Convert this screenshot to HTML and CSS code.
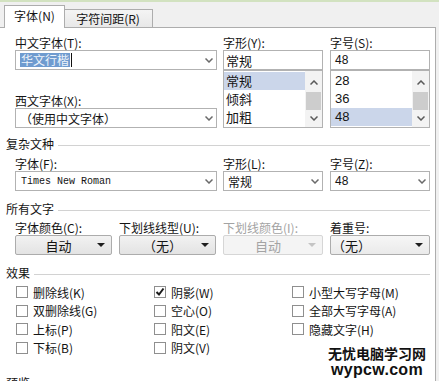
FILE: index.html
```html
<!DOCTYPE html>
<html lang="zh-CN">
<head>
  <meta charset="UTF-8">
  <title>字体</title>
  <link rel="stylesheet" href="styles.css">
</head>
<body>
  <div class="window">
    <div class="tabs">
      <div class="tab active">字体(N)</div>
      <div class="tab">字符间距(R)</div>
    </div>

    <div class="panel">
      <div class="row">
        <div class="col">
          <label>中文字体(T):</label>
          <div class="combo"><span class="pick">华文行楷</span><span class="caret"></span><svg class="chev" width="8" height="5" viewBox="0 0 8 5"><polyline points="0.5,0.5 4,4 7.5,0.5" /></svg></div>
          <label class="gap">西文字体(X):</label>
          <div class="combo"><span class="grow">（使用中文字体）</span><svg class="chev" width="8" height="5" viewBox="0 0 8 5"><polyline points="0.5,0.5 4,4 7.5,0.5" /></svg></div>
        </div>
        <div class="col">
          <label>字形(Y):</label>
          <div class="field">常规</div>
          <div class="list">
            <div class="items">
              <div class="item on">常规</div>
              <div class="item">倾斜</div>
              <div class="item">加粗</div>
            </div>
            <div class="scroll">
              <svg width="8" height="5" viewBox="0 0 8 5"><polyline points="0.5,4.5 4,1 7.5,4.5" /></svg>
              <div class="thumb"></div>
              <svg width="8" height="5" viewBox="0 0 8 5"><polyline points="0.5,0.5 4,4 7.5,0.5" /></svg>
            </div>
          </div>
        </div>
        <div class="col">
          <label>字号(S):</label>
          <div class="field num">48</div>
          <div class="list">
            <div class="items num">
              <div class="item">28</div>
              <div class="item">36</div>
              <div class="item on">48</div>
            </div>
            <div class="scroll">
              <svg width="8" height="5" viewBox="0 0 8 5"><polyline points="0.5,4.5 4,1 7.5,4.5" /></svg>
              <div class="thumb"></div>
              <svg width="8" height="5" viewBox="0 0 8 5"><polyline points="0.5,0.5 4,4 7.5,0.5" /></svg>
            </div>
          </div>
        </div>
      </div>

      <div class="section">复杂文种</div>
      <div class="row tight">
        <div class="col">
          <label>字体(F):</label>
          <div class="combo"><span class="grow mono">Times New Roman</span><svg class="chev" width="8" height="5" viewBox="0 0 8 5"><polyline points="0.5,0.5 4,4 7.5,0.5" /></svg></div>
        </div>
        <div class="col">
          <label>字形(L):</label>
          <div class="combo narrow"><span class="grow">常规</span><svg class="chev" width="8" height="5" viewBox="0 0 8 5"><polyline points="0.5,0.5 4,4 7.5,0.5" /></svg></div>
        </div>
        <div class="col">
          <label>字号(Z):</label>
          <div class="combo"><span class="grow num">48</span><svg class="chev" width="8" height="5" viewBox="0 0 8 5"><polyline points="0.5,0.5 4,4 7.5,0.5" /></svg></div>
        </div>
      </div>

      <div class="section">所有文字</div>
      <div class="buttons">
        <div class="col">
          <label>字体颜色(C):</label>
          <div class="btn"><span>自动</span><i class="tri"></i></div>
        </div>
        <div class="col">
          <label>下划线线型(U):</label>
          <div class="btn"><span>（无）</span><i class="tri"></i></div>
        </div>
        <div class="col off">
          <label>下划线颜色(I):</label>
          <div class="btn"><span>自动</span><i class="tri"></i></div>
        </div>
        <div class="col">
          <label>着重号:</label>
          <div class="btn left"><span>（无）</span><i class="tri"></i></div>
        </div>
      </div>

      <div class="section">效果</div>
      <div class="checks">
        <div class="check"><span class="box"></span>删除线(K)</div>
        <div class="check"><span class="box"><svg width="10" height="10" viewBox="0 0 10 10"><polyline points="1.5,5 4,7.5 8.5,1.5" /></svg></span>阴影(W)</div>
        <div class="check"><span class="box"></span>小型大写字母(M)</div>
        <div class="check"><span class="box"></span>双删除线(G)</div>
        <div class="check"><span class="box"></span>空心(O)</div>
        <div class="check"><span class="box"></span>全部大写字母(A)</div>
        <div class="check"><span class="box"></span>上标(P)</div>
        <div class="check"><span class="box"></span>阳文(E)</div>
        <div class="check"><span class="box"></span>隐藏文字(H)</div>
        <div class="check"><span class="box"></span>下标(B)</div>
        <div class="check"><span class="box"></span>阴文(V)</div>
      </div>

      <div class="section last">预览</div>
    </div>

    <div class="mark">
      <div class="mark-cn">无忧电脑学习网</div>
      <div class="mark-en">wypcw.com</div>
    </div>
  </div>
</body>
</html>
```

FILE: styles.css
```css
body {
  margin: 0;
  background: #f0f0f0;
  font-family: "Noto Sans CJK SC", sans-serif;
  font-size: 12px;
  color: #141414;
}
.window {
  position: relative;
  width: 439px;
  height: 381px;
  overflow: hidden;
  border-top: 2px solid #d2e2c0;
  box-sizing: border-box;
}
.tabs {
  display: flex;
  align-items: flex-end;
  height: 25px;
  padding-left: 4px;
}
.tab {
  box-sizing: border-box;
  display: flex;
  align-items: center;
  justify-content: center;
  border: 1px solid #adadad;
  border-bottom: none;
  line-height: 14px;
}
.tab.active {
  position: relative;
  z-index: 1;
  width: 61px;
  height: 23px;
  margin-bottom: -1px;
  background: #fff;
  padding-bottom: 2px;
}
.tab:not(.active) {
  width: 89px;
  height: 18px;
  margin-left: -1px;
  background: linear-gradient(#f4f4f4, #e8e8e8);
  border-left: none;
}
.panel {
  box-sizing: border-box;
  width: 436px;
  height: 360px;
  background: #fff;
  border-top: 1px solid #adadad;
  border-right: 1px solid #adadad;
  padding-top: 7px;
}
label {
  display: block;
  height: 15px;
  line-height: 15px;
  white-space: nowrap;
}
label.gap {
  margin-top: 23px;
}
.row {
  display: grid;
  grid-template-columns: 202px 101px 100px;
  column-gap: 6px;
  padding-left: 15px;
}
.row.tight {
  margin-top: 4px;
}
.row .col:nth-child(2) > * {
  width: 100px;
}
.combo, .field {
  box-sizing: border-box;
  height: 20px;
  display: flex;
  align-items: center;
  border: 1px solid #b2b2b2;
  background: #fff;
  padding: 0 3px 0 4px;
  font-size: 12px;
  white-space: nowrap;
}
.field {
  padding-left: 2px;
  font-size: 13px;
}
.grow {
  flex: 1;
}
.pick {
  background: #6f9bcf;
  color: #eef4fb;
  line-height: 14px;
  padding: 0 1px;
}
.caret {
  width: 1px;
  height: 14px;
  background: #111;
  margin-left: 1px;
  flex: 1;
  max-width: 1px;
}
.combo .caret + .chev {
  margin-left: auto;
}
.chev polyline {
  fill: none;
  stroke: #6a6a6a;
  stroke-width: 1.5;
}
.mono {
  font-family: "Liberation Mono", monospace;
  font-size: 10px;
  padding-left: 1px;
}
.num {
  font-family: "Liberation Sans", sans-serif;
  font-size: 12px;
}
.field.num {
  padding-left: 4px;
}
.list {
  box-sizing: border-box;
  height: 58px;
  display: flex;
  border: 1px solid #b2b2b2;
  background: #fff;
}
.items {
  flex: 1;
  padding-top: 1px;
  font-size: 13px;
}
.item {
  height: 18px;
  line-height: 18px;
  padding-left: 2px;
}
.items.num .item {
  padding-left: 4px;
}
.item.on {
  background: #cbd6ea;
}
.scroll {
  width: 17px;
  display: flex;
  flex-direction: column;
  align-items: center;
  justify-content: space-between;
  background: #f3f3f3;
  padding: 9px 0 6px;
  box-sizing: border-box;
}
.scroll polyline {
  fill: none;
  stroke: #5a5a5a;
  stroke-width: 1.5;
}
.thumb {
  width: 15px;
  height: 18px;
  background: #cdcdcd;
}
.section {
  display: flex;
  align-items: center;
  gap: 4px;
  width: 424px;
  height: 16px;
  margin-top: 8px;
  padding-left: 6px;
  line-height: 16px;
}
.section::after {
  content: "";
  flex: 1;
  border-top: 1px solid #d2d2d2;
  margin-top: 2px;
}
.section + .row,
.section + .buttons {
  margin-top: 4px;
}
.row.tight + .section,
.buttons + .section {
  margin-top: 10px;
}
.buttons {
  display: grid;
  grid-template-columns: 97px 97px 100px 100px;
  column-gap: 7px;
  padding-left: 15px;
}
.buttons label {
  margin-top: -1px;
}
.btn {
  box-sizing: border-box;
  height: 20px;
  display: flex;
  align-items: center;
  border: 1px solid #acacac;
  border-radius: 2px;
  background: linear-gradient(#f2f2f2, #e3e3e3);
  padding-right: 6px;
  font-size: 13px;
}
.btn span {
  flex: 1;
  text-align: center;
  padding-left: 4px;
}
.btn.left {
  background: linear-gradient(#f6f6f6, #eaeaea);
}
.btn.left span {
  text-align: left;
  padding-left: 1px;
}
.tri {
  width: 0;
  height: 0;
  border-left: 4px solid transparent;
  border-right: 4px solid transparent;
  border-top: 4px solid #1e1e1e;
}
.off {
  color: #a3a3a3;
}
.off .btn {
  background: #f4f4f4;
  border-color: #d6d6d6;
}
.off .tri {
  border-top-color: #c4c4c4;
}
.checks {
  display: grid;
  grid-template-columns: 138px 138px auto;
  grid-auto-rows: 18.5px;
  margin-top: 2px;
  padding-left: 16px;
}
.check {
  display: flex;
  align-items: center;
  gap: 5px;
  white-space: nowrap;
}
.check:nth-child(10) {
  grid-column: 1;
}
.box {
  box-sizing: border-box;
  width: 12px;
  height: 12px;
  border: 1px solid #8f8f8f;
  background: #fff;
  display: flex;
  align-items: center;
  justify-content: center;
}
.box polyline {
  fill: none;
  stroke: #1a1a1a;
  stroke-width: 2;
}
.section.last {
  margin-top: 18px;
}
.mark {
  position: absolute;
  left: 328px;
  top: 343px;
  font-weight: 700;
  color: #111;
  text-align: center;
}
.mark-cn {
  font-size: 14px;
  line-height: 16px;
}
.mark-en {
  margin-top: 2px;
  font-family: "Liberation Sans", sans-serif;
  font-size: 16px;
  line-height: 14px;
  letter-spacing: 0.3px;
}
```
